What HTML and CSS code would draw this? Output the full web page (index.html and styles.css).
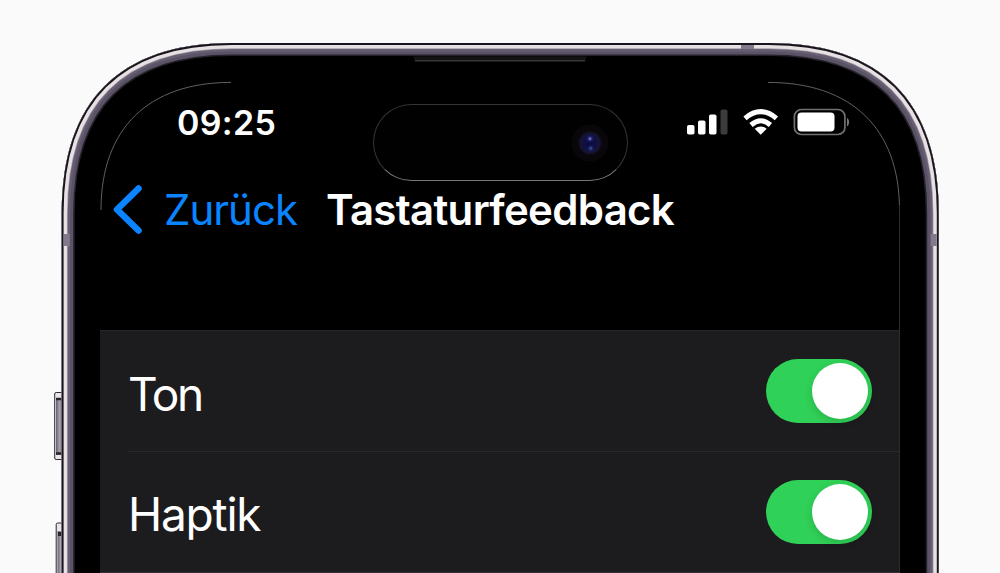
FILE: index.html
```html
<!doctype html>
<html lang="de">
    <head>
        <meta charset="UTF-8" />
        <meta name="viewport" content="width=device-width, initial-scale=1.0" />
        <title>Tastaturfeedback</title>
        <link rel="stylesheet" href="styles.css">
    </head>
    <body>
        <!-- Phone body, side buttons and bezel -->
        <svg class="frame" viewBox="0 0 1000 573" aria-hidden="true">
            <defs>
                <linearGradient id="button" x1="0" x2="1" y1="0" y2="0">
                    <stop offset="0" stop-color="#665f70" />
                    <stop offset="0.6" stop-color="#aaa4b0" />
                    <stop offset="1" stop-color="#77707f" />
                </linearGradient>
                <path id="body" d="M61.7 620V213C61.7 101 119.7 43 231.7 43H768.7C880.7 43 938.7 101 938.7 213V620Z" />
                <clipPath id="bodyClip"><use href="#body" /></clipPath>
            </defs>
            <rect x="54.7" y="392.5" width="10" height="67" rx="1.5" fill="#e9e6ea" stroke="#2b2630" />
            <rect x="56" y="398" width="6" height="57" fill="url(#button)" />
            <path d="M56 399h6M56 453.500h6" stroke="#27222b" stroke-width="2.500" />
            <rect x="56.2" y="523" width="9" height="80" rx="1.5" fill="#e9e6ea" stroke="#2b2630" />
            <rect x="57.500" y="531" width="5" height="60" fill="url(#button)" />
            <path d="M58 534h4" stroke="#27222b" stroke-width="4" />
            <g clip-path="url(#bodyClip)">
                <use href="#body" fill="#000" />
                <g fill="none">
                    <use href="#body" stroke="#25212b" stroke-width="26" />
                    <use href="#body" stroke="#5a5265" stroke-width="23" />
                    <use href="#body" stroke="#665e72" stroke-width="17" />
                    <use href="#body" stroke="#a9a1ac" stroke-width="12" />
                    <use href="#body" stroke="#e8e1e3" stroke-width="10.500" />
                    <use href="#body" stroke="#19151d" stroke-width="3.800" />
                </g>
                <path d="M63.700 234h6v12h-6zM930.700 234h6v12h-6zM741 45h13v4h-13z" fill="#82798c" />
            </g>
            <path d="M413 56.500L415 60.500H585L587 56.500Z" fill="#141414" />
            <path d="M415 60.700H585" stroke="#383838" stroke-width="1.500" />
            <g fill="none" stroke="#777" stroke-width="0.800">
                <path d="M101 210C101 128 149 82.400 231 82.400" />
                <path d="M768 82.400C851 82.400 899.500 128 899.500 210" />
            </g>
        </svg>

        <div class="screen">
            <div class="status-bar">
                <div class="time">09:25</div>
                <div class="island"><div class="camera"></div></div>
                <svg class="status-icons" viewBox="0 0 164 28">
                    <g fill="#fff">
                        <rect x="1" y="17" width="7.500" height="9.500" rx="1.800" />
                        <rect x="12" y="12.500" width="7.500" height="14" rx="1.800" />
                        <rect x="23" y="6.500" width="7.500" height="20" rx="1.800" />
                        <rect x="34.500" y="1.500" width="7" height="25" rx="1.800" fill="#3c3c3c" />
                    </g>
                    <g fill="none" stroke="#fff" stroke-width="5">
                        <path d="M59 10.300Q74.700 -3 90.400 10.300" />
                        <path d="M65 17Q74.700 8.500 84.400 17" />
                    </g>
                    <path d="M74.700 26.800L68.700 20.800Q74.700 16.200 80.700 20.800Z" fill="#fff" />
                    <rect x="108.400" y="1.500" width="50.500" height="25" rx="7" fill="none" stroke="#707070" stroke-width="1.700" />
                    <rect x="111.500" y="4.500" width="37" height="19" rx="4" fill="#fff" />
                    <path d="M161.500 10.500Q164 14 161.500 18Z" fill="#777" stroke="#777" />
                </svg>
            </div>

            <div class="nav-bar">
                <svg class="chevron" viewBox="0 0 30 50">
                    <path d="M26.500 4.500L5 25.500L26.500 46.500" />
                </svg>
                <span class="back">Zurück</span>
                <h1>Tastaturfeedback</h1>
            </div>

            <div class="settings">
                <div class="row">
                    <span class="label ton">Ton</span>
                    <div class="toggle"></div>
                </div>
                <div class="row">
                    <span class="label">Haptik</span>
                    <div class="toggle"></div>
                </div>
            </div>
        </div>
    </body>
</html>
```
FILE: styles.css
```css
* {
    box-sizing: border-box;
}
body {
    font-family: Inter, "Liberation Sans", sans-serif;
    margin: 0;
    height: 573px;
    overflow: hidden;
    background-color: #fafafa;
    color: #fff;
}
.frame {
    position: absolute;
    top: 0;
    left: 0;
    width: 1000px;
    height: 573px;
}
.screen {
    position: relative;
    width: 800px;
    margin-left: 100px;
    padding-top: 104px;
    background: linear-gradient(#2c2c2c, #2c2c2c) 799px 205px / 1px 400px no-repeat;
}
.status-bar {
    display: flex;
    align-items: flex-start;
    height: 80px;
    padding-left: 77px;
}
.time {
    width: 196px;
    font-size: 34px;
    line-height: 38px;
    font-weight: 600;
    letter-spacing: 0.3px;
}
.island {
    display: flex;
    align-items: center;
    justify-content: flex-end;
    width: 255px;
    height: 77px;
    padding-right: 18px;
    border: 1px solid #343434;
    border-bottom-color: #777;
    border-radius: 39px;
    background: #010101;
}
.camera {
    width: 38px;
    height: 38px;
    border-radius: 50%;
    background:
        radial-gradient(circle at 50% 39%, #8c8bd0 0, #35349088 2px, transparent 4px),
        radial-gradient(circle at 52% 64%, #386896 0, #202b6888 2px, transparent 4px),
        radial-gradient(circle, #090943 0, #111143 7px, #151431 10px, #09070b 12px, #080609 18px, #010101 19px);
}
.status-icons {
    width: 164px;
    height: 28px;
    margin: 4px 0 0 58px;
}
.nav-bar {
    display: flex;
    align-items: center;
    height: 50px;
    padding-left: 12px;
}
.chevron {
    width: 30px;
    height: 50px;
    fill: none;
    stroke: #0a84ff;
    stroke-width: 6.5;
    stroke-linecap: round;
    stroke-linejoin: round;
}
.back {
    width: 184px;
    padding-left: 22px;
    color: #0a84ff;
    font-size: 42px;
    letter-spacing: -1px;
}
h1 {
    margin: 0;
    font-size: 42px;
    font-weight: 600;
    letter-spacing: -0.7px;
}
.settings {
    width: 799px;
    margin-top: 96px;
    background: #1c1c1e;
    border-top: 1px solid #272729;
    border-bottom: 1px solid #343436;
}
.row {
    display: flex;
    align-items: center;
    justify-content: space-between;
    height: 120px;
    padding: 0 27px 0 28px;
}
.row + .row {
    height: 121px;
    background: linear-gradient(#29292b, #29292b) 28px 0 / 771px 1px no-repeat;
}
.label {
    padding-top: 5px;
    font-size: 46px;
    letter-spacing: -1.2px;
}
.ton {
    letter-spacing: -2.3px;
}
.toggle {
    display: flex;
    justify-content: flex-end;
    width: 106px;
    height: 64px;
    padding: 4px;
    border-radius: 32px;
    background: #30d158;
}
.toggle::after {
    content: "";
    width: 56px;
    height: 56px;
    border-radius: 50%;
    background: #fff;
    box-shadow: 0 3px 8px rgba(0, 0, 0, 0.15);
}
```
